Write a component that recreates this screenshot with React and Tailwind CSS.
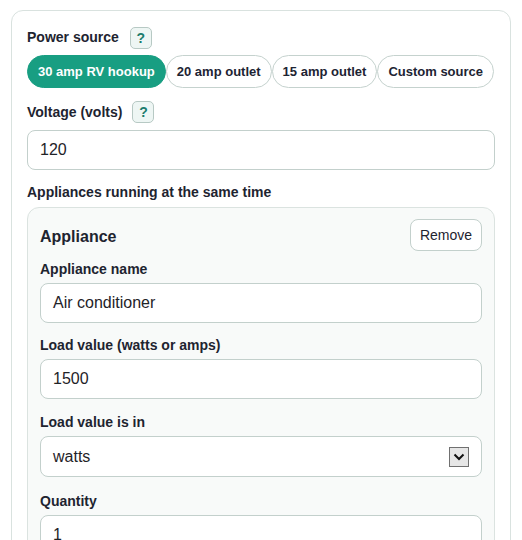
import React from "react";

function Help() {
  return (
    <span className="inline-flex items-center justify-center w-[22px] h-[22px] rounded-[5px] border border-[#b7c9c4] bg-[#eef6f4] text-[#1b7c6d] text-[14px] font-bold leading-none">
      ?
    </span>
  );
}

function Field({ label, value, select, className = "" }) {
  return (
    <div className={className}>
      <div className="text-[14px] font-bold leading-[20px] text-[#1e2430] mb-1">{label}</div>
      {select ? (
        <div className="h-[41px] rounded-[8px] border border-[#c3d0cc] bg-white pl-[12px] pr-[12px] flex items-center justify-between text-[16px] text-[#1f2328]">
          <span>{value}</span>
          <span className="w-[20px] h-[20px] border border-[#707070] bg-[#e6e6e6] flex items-center justify-center">
            <svg width="12" height="8" viewBox="0 0 12 8">
              <path d="M1.5 1.5 L6 6 L10.5 1.5" fill="none" stroke="#111" strokeWidth="2" />
            </svg>
          </span>
        </div>
      ) : (
        <div className="h-[40px] rounded-[8px] border border-[#c3d0cc] bg-white px-[12px] flex items-center text-[16px] text-[#1f2328]">
          {value}
        </div>
      )}
    </div>
  );
}

export default function App() {
  const pills = ["30 amp RV hookup", "20 amp outlet", "15 amp outlet", "Custom source"];
  return (
    <div
      className="bg-white min-h-[540px] pt-[10px] px-[11px] overflow-hidden"
      style={{ fontFamily: '"Liberation Sans", Arial, sans-serif' }}
    >
      <div className="w-[500px] rounded-[12px] border border-[#d9e2df] px-[15px] pt-[16px] pb-4">
        <div className="flex items-center gap-[11px] h-[22px]">
          <span className="text-[14px] font-bold text-[#1e2430] -mt-[2px]">Power source</span>
          <Help />
        </div>
        <div className="flex gap-0 mt-[6px]">
          {pills.map((p, i) => (
            <span
              key={p}
              className={
                i === 0
                  ? "h-[33px] px-[10px] rounded-full border border-[#189e82] bg-[#189e82] text-white text-[13px] font-bold flex items-center whitespace-nowrap"
                  : "h-[33px] px-[10px] rounded-full border border-[#c5d2ce] bg-white text-[#1d2433] text-[13px] font-bold flex items-center whitespace-nowrap"
              }
            >
              {p}
            </span>
          ))}
        </div>
        <div className="flex items-center gap-[10px] h-[22px] mt-[13px]">
          <span className="text-[14px] font-bold text-[#1e2430]">Voltage (volts)</span>
          <Help />
        </div>
        <div className="mt-[7px] h-[40px] rounded-[8px] border border-[#c3d0cc] bg-white px-[12px] flex items-center text-[16px] text-[#1f2328]">
          120
        </div>
        <div className="mt-[12px] text-[14px] font-bold leading-[20px] text-[#1e2430]">
          Appliances running at the same time
        </div>
        <div className="mt-[5px] rounded-[12px] border border-[#dbe3e0] bg-[#f8faf9] px-3 pt-[11px] pb-4">
          <div className="flex items-center justify-between h-[32px]">
            <span className="text-[16px] font-bold text-[#1e2430] mt-[4px]">Appliance</span>
            <span className="h-[32px] w-[72px] rounded-[8px] border border-[#c3d0cc] bg-white flex items-center justify-center text-[14px] text-[#1e2430]">
              Remove
            </span>
          </div>
          <Field className="mt-[8px]" label="Appliance name" value="Air conditioner" />
          <Field className="mt-[12px]" label="Load value (watts or amps)" value="1500" />
          <Field className="mt-[13px]" label="Load value is in" value="watts" select />
          <Field className="mt-[14px]" label="Quantity" value="1" />
        </div>
      </div>
    </div>
  );
}
